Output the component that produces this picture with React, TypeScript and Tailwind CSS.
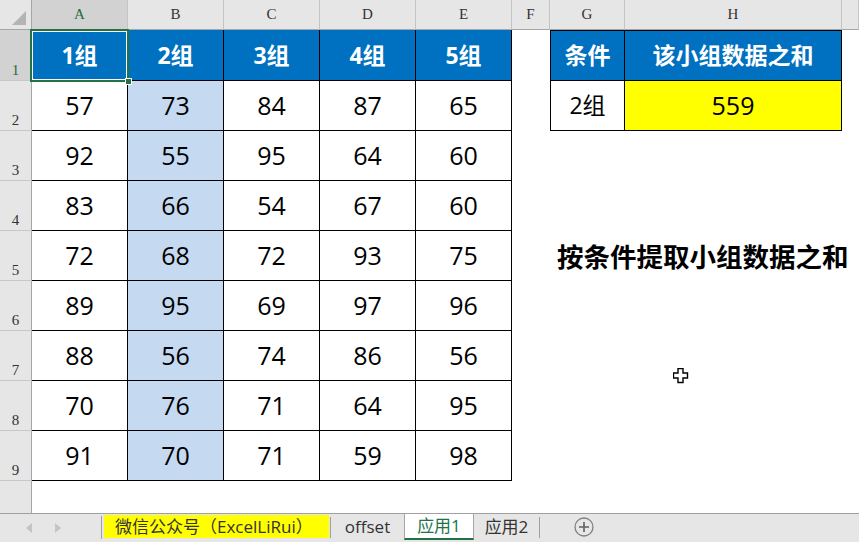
import React from "react";

const grid = "grid grid-cols-[32px_96px_96px_96px_96px_96px_38px_75px_217px_1fr]";
const letters = ["A", "B", "C", "D", "E", "F", "G", "H", ""];

const data = [
  [57, 73, 84, 87, 65],
  [92, 55, 95, 64, 60],
  [83, 66, 54, 67, 60],
  [72, 68, 72, 93, 75],
  [89, 95, 69, 97, 96],
  [88, 56, 74, 86, 56],
  [70, 76, 71, 64, 95],
  [91, 70, 71, 59, 98],
];

const cell = "flex items-center justify-center border-r border-b border-black";
const blueCell = `${cell} bg-[#0070c0] text-white font-bold text-[23px]`;

function RowHead({ n, active = false }: { n: string; active?: boolean }) {
  return (
    <div
      className={`flex items-end justify-center pb-[2px] border-r border-b border-r-[#a6a6a6] border-b-[#c8c8c8] font-['Liberation_Serif',serif] text-[15px] leading-none ${
        active ? "bg-[#d2d2d2] text-[#1e6b41]" : "bg-[#e6e6e6] text-[#333]"
      }`}
    >
      {n}
    </div>
  );
}

function Cursor() {
  return (
    <svg className="absolute left-[673px] top-[368px]" width="16" height="16" viewBox="0 0 16 16">
      <path
        d="M5 0.5H10V5H14.5V10H10V14.5H5V10H0.5V5H5Z"
        fill="white"
        stroke="black"
        strokeWidth="1.4"
      />
    </svg>
  );
}

export default function App() {
  return (
    <div className="relative w-[859px] h-[542px] overflow-hidden bg-white font-['Open_Sans','Noto_Sans_CJK_SC',sans-serif] text-black">
      {/* column headers */}
      <div className={`${grid} h-[30px]`}>
        <div className="relative bg-[#e6e6e6] border-r border-b border-r-[#a6a6a6] border-b-[#a6a6a6]">
          <svg className="absolute left-[11px] top-[10px]" width="16" height="16" viewBox="0 0 16 16">
            <path d="M1 15L15 1V15Z" fill="#b4b4b4" />
          </svg>
        </div>
        {letters.map((l, i) => (
          <div
            key={i}
            className={`flex items-center justify-center border-r border-b border-r-[#c4c4c4] border-b-[#a6a6a6] font-['Liberation_Serif',serif] text-[15px] ${
              i === 0 ? "bg-[#d2d2d2] text-[#1e6b41]" : "bg-[#e6e6e6] text-[#333]"
            }`}
          >
            {l}
          </div>
        ))}
      </div>

      {/* row 1 */}
      <div className={`${grid} h-[51px]`}>
        <RowHead n="1" active />
        {["1组", "2组", "3组", "4组", "5组"].map((t, i) => (
          <div key={t} className={`${blueCell} ${i === 0 ? "relative z-10" : ""}`}>
            {t}
            {i === 0 && (
              <>
                <div className="absolute -left-[2px] -top-[1px] right-[-2px] bottom-[-2px] border-2 border-[#217346]">
                  <div className="w-full h-full border border-white" />
                </div>
                <div className="absolute right-[-5px] bottom-[-5px] w-[7px] h-[7px] bg-[#217346] border border-white" />
              </>
            )}
          </div>
        ))}
        <div />
        <div className={`${blueCell} border-l border-t`}>条件</div>
        <div className={`${blueCell} border-t`}>该小组数据之和</div>
        <div />
      </div>

      {data.map((row, r) => (
        <div key={r} className={`${grid} h-[50px]`}>
          <RowHead n={String(r + 2)} />
          {row.map((v, c) => (
            <div
              key={c}
              className={`${cell} text-[25px] ${c === 1 ? "bg-[#c5d9f1]" : ""}`}
            >
              {v}
            </div>
          ))}
          <div />
          {r === 0 && (
            <>
              <div className={`${cell} border-l text-[23px]`}>2组</div>
              <div className={`${cell} bg-[#ffff00] text-[25px]`}>559</div>
              <div />
            </>
          )}
          {r === 3 && (
            <div className="col-span-3 flex items-center pl-[7px] whitespace-nowrap font-['Noto_Sans_CJK_SC',sans-serif] font-bold text-[26.5px]">
              按条件提取小组数据之和
            </div>
          )}
        </div>
      ))}

      {/* empty row below */}
      <div className={`${grid} h-[32px]`}>
        <div className="bg-[#e6e6e6] border-r border-r-[#a6a6a6]" />
      </div>

      {/* sheet tabs */}
      <div className="flex h-[29px] border-t border-[#a0a0a0] bg-[#e6e6e6] text-[17px] text-[#333]">
        <div className="w-[101px] flex items-center pl-[26px] gap-[23px]">
          <svg width="6" height="10" viewBox="0 0 6 10">
            <path d="M6 0V10L0 5Z" fill="#c4c4c4" />
          </svg>
          <svg width="6" height="10" viewBox="0 0 6 10">
            <path d="M0 0V10L6 5Z" fill="#c4c4c4" />
          </svg>
        </div>
        <div className="w-px h-[23px] mt-[2px] bg-[#a0a0a0]" />
        <div className="ml-[2px] w-[225px] h-[23px] mt-[1px] bg-[#ffff00] flex items-center pl-[11px] whitespace-nowrap">
          微信公众号（ExcelLiRui）
        </div>
        <div className="ml-[1px] w-px h-[21px] mt-[3px] bg-[#a0a0a0]" />
        <div className="w-[73px] flex items-center justify-center pb-[3px]">offset</div>
        <div className="w-[70px] h-[26px] bg-white border-l border-r border-b-2 border-l-[#a6a6a6] border-r-[#a6a6a6] border-b-[#217346] flex items-center justify-center text-[#217346]">
          应用1
        </div>
        <div className="w-[65px] flex items-center justify-center pb-[3px]">应用2</div>
        <div className="w-px h-[21px] mt-[3px] bg-[#a0a0a0]" />
        <div className="ml-[34px] flex items-center pb-[2px]">
          <svg width="20" height="20" viewBox="0 0 20 20">
            <circle cx="10" cy="10" r="9" fill="none" stroke="#808080" strokeWidth="1.3" />
            <path d="M10 5V15M5 10H15" stroke="#606060" strokeWidth="1.6" />
          </svg>
        </div>
      </div>

      <Cursor />
    </div>
  );
}
